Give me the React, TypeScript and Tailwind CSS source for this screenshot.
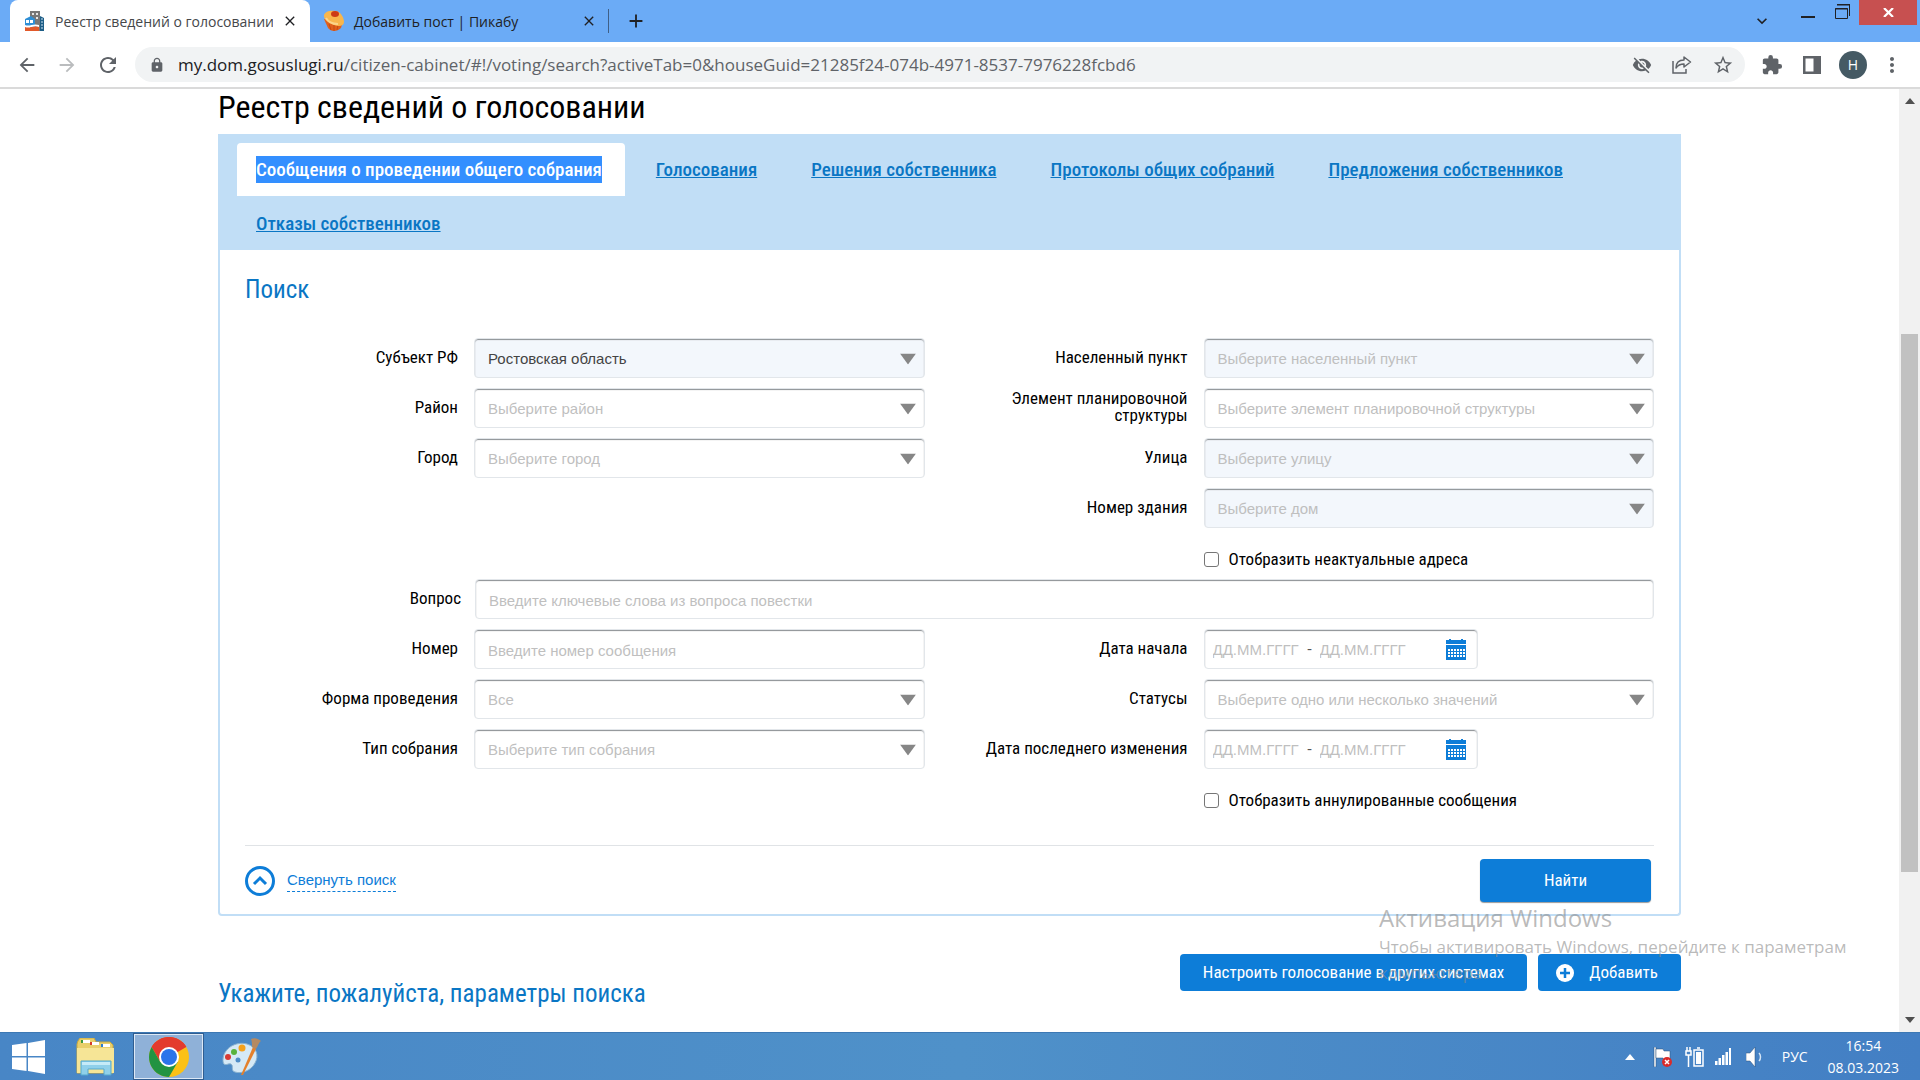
import React from 'react';
import {
  MdArrowBack,
  MdArrowForward,
  MdRefresh,
  MdLock,
  MdVisibilityOff,
  MdStarBorder,
  MdExtension,
  MdMoreVert,
  MdClose,
  MdAdd,
  MdKeyboardArrowDown,
} from 'react-icons/md';

const condensed = "font-['Roboto_Condensed','Liberation_Sans_Narrow',Roboto,sans-serif]";

const Arrow: React.FC = () => (
  <svg className="absolute right-[9px] top-1/2 -translate-y-1/2 mt-px pointer-events-none" width="16" height="11" viewBox="0 0 16 11">
    <path d="M0 0h16L8 11z" fill="#868686" />
  </svg>
);

const boxClass =
  'h-10 w-full rounded border border-[#e2e6ea] shadow-[inset_0_1px_1px_#8b8f93] text-[15px] appearance-none outline-none';

interface RowProps {
  id: string;
  label: string;
  children: React.ReactNode;
}

const Row: React.FC<RowProps> = ({ id, label, children }) => (
  <div className="flex h-10 items-center">
    <label htmlFor={id} className={`${condensed} w-[229px] pb-[2px] pr-4 text-right text-[17px] leading-[17px] text-black`}>
      {label}
    </label>
    <div className="relative flex-1">{children}</div>
  </div>
);

interface SelectRowProps {
  id: string;
  label: string;
  value: string;
  filled?: boolean;
  shaded?: boolean;
}

const SelectRow: React.FC<SelectRowProps> = ({ id, label, value, filled, shaded }) => (
  <Row id={id} label={label}>
    <select
      id={id}
      className={`${boxClass} pl-[13px] pr-8 pt-[2px] ${filled ? 'text-[#444]' : 'text-[#bfbfbf]'} ${shaded ? 'bg-[#f3f7fc]' : 'bg-white'}`}
    >
      <option>{value}</option>
    </select>
    <Arrow />
  </Row>
);

const CalendarIcon: React.FC = () => (
  <svg width="20" height="21" viewBox="0 0 20 21" fill="#0d7dd8">
    <path d="M3 0h2v1h10V0h2v1h3v4H0V1h3z" />
    <path d="M0 6h20v15H0z" />
    <g fill="#fff">
      {[10, 13, 16].map(y => [2, 5, 8, 11, 14, 17].map(x => <rect key={`${x}-${y}`} x={x} y={y} width="2" height="2" />))}
    </g>
  </svg>
);

const DateRow: React.FC<{ id: string; label: string }> = ({ id, label }) => (
  <Row id={id} label={label}>
    <div className={`${boxClass} flex items-center max-w-[274px] pl-2 pr-[11px]`}>
      <input id={id} placeholder="ДД.ММ.ГГГГ" className="w-[87px] pt-[2px] outline-none placeholder:text-[#bfbfbf]" />
      <span className="w-5 text-center text-[#555]">-</span>
      <input aria-label={`${label}, по`} placeholder="ДД.ММ.ГГГГ" className="w-[87px] pt-[2px] outline-none placeholder:text-[#bfbfbf]" />
      <button type="button" aria-label="Открыть календарь" className="ml-auto">
        <CalendarIcon />
      </button>
    </div>
  </Row>
);

const CheckRow: React.FC<{ id: string; label: string }> = ({ id, label }) => (
  <div className="flex h-10 items-center pl-[229px] pt-[2px]">
    <input
      id={id}
      type="checkbox"
      className="size-[15px] appearance-none rounded-[3px] border border-[#767676] bg-white"
    />
    <label htmlFor={id} className={`${condensed} pl-[10px] text-[17px] leading-5 text-black`}>
      {label}
    </label>
  </div>
);

const tabs = [
  'Сообщения о проведении общего собрания',
  'Голосования',
  'Решения собственника',
  'Протоколы общих собраний',
  'Предложения собственников',
  'Отказы собственников',
];

const HouseIcon: React.FC = () => (
  <svg width="22" height="22" viewBox="0 0 22 22" className="shrink-0">
    <path d="M6 1h10v20H6z" fill="#777" />
    <path d="M8 3h2v2H8zM12 3h2v2h-2zM12 7h2v2h-2z" fill="#e6e6e6" />
    <path d="M16 6l4 2v13h-4z" fill="#1d5d86" />
    <path d="M17 9h2M17 12h2M17 15h2M17 18h2" stroke="#cfe6f5" />
    <path d="M1 9l6-3 4 3v8H1z" fill="#2f8fd6" />
    <path d="M2 10h3v3H2zM6 10h3v3H6z" fill="#fff" />
    <path d="M1 15c5 2 8-2 14 0v2c-6-2-9 2-14 0z" fill="#fff" />
    <path d="M1 17c5 2 8-2 14 0v4H1z" fill="#e2592a" />
  </svg>
);

const CakeIcon: React.FC = () => (
  <svg width="22" height="22" viewBox="0 0 22 22" className="shrink-0">
    <path d="M1 9l4 9c3 4 9 4 13 0l2-7z" fill="#e0601c" />
    <path d="M6 14l2 6M11 15v6M15 15l-1 5" stroke="#c54a12" />
    <path d="M1 5c1-4 7-5 12-4s8 7 8 11-5 5-10 3S0 9 1 5z" fill="#f8b64c" />
    <path d="M3 8c2 4 7 6 12 6" stroke="#fbd48a" strokeWidth="2" fill="none" />
    <ellipse cx="12" cy="4" rx="4" ry="3" fill="#cc3b16" />
  </svg>
);

const ShareIcon: React.FC = () => (
  <svg width="20" height="18" viewBox="0 0 20 18" fill="none" stroke="#5f6368" strokeWidth="1.500">
    <path d="M1 5v12h13v-4" />
    <path d="M12 1l6.500 5-6.500 5V8c-4 0-6 1-8 4 0-5 3-8 8-8z" strokeLinejoin="round" />
  </svg>
);

const BrowserChrome: React.FC = () => (
  <header className="font-['Open_Sans','Noto_Sans',sans-serif]">
    <div className="flex h-[42px] bg-[#6babf6] pl-[10px] text-[14px] text-[#202124]">
      <div className="flex w-[300px] items-center gap-[9px] rounded-t-lg bg-white pl-[14px] pr-3">
        <HouseIcon />
        <span className="flex-1 overflow-hidden whitespace-nowrap text-[#45474a]">Реестр сведений о голосовании</span>
        <button aria-label="Закрыть вкладку">
          <MdClose size={16} />
        </button>
      </div>
      <div className="flex w-[298px] items-center gap-[9px] border-r border-transparent pl-[13px] pr-[10px]">
        <CakeIcon />
        <span className="flex-1">Добавить пост | Пикабу</span>
        <button aria-label="Закрыть вкладку">
          <MdClose size={16} />
        </button>
      </div>
      <div className="mt-[9px] h-6 w-px bg-[#3f5f86]" />
      <button aria-label="Новая вкладка" className="ml-4">
        <MdAdd size={22} />
      </button>
      <div className="ml-auto flex items-start">
        <button aria-label="Поиск вкладок" className="mr-[29px] mt-[11px]">
          <MdKeyboardArrowDown size={20} />
        </button>
        <button aria-label="Свернуть" className="mr-5 mt-4">
          <svg width="14" height="2"><path d="M0 0h14v2H0z" fill="#202124" /></svg>
        </button>
        <button aria-label="Восстановить" className="mr-[9px] mt-1">
          <svg width="15" height="15" viewBox="0 0 15 15" fill="none" stroke="#202124">
            <path d="M2 1h12.500v11M2 .5h13" />
            <path d="M.5 4.500h12v10H.5zM0 5h13" />
          </svg>
        </button>
        <button aria-label="Закрыть" className="mr-[3px] flex h-[25px] w-[58px] items-center justify-center bg-[#c75050]">
          <svg width="11" height="9" viewBox="0 0 11 9"><path d="M1 0l9 9M10 0L1 9" stroke="#fff" strokeWidth="2.200" /></svg>
        </button>
      </div>
    </div>
    <div className="flex h-[47px] items-center border-b-2 border-[#dadada] bg-white pl-4 pr-4 text-[#5f6368]">
      <button aria-label="Назад"><MdArrowBack size={22} /></button>
      <button aria-label="Вперёд" className="ml-[18px] text-[#babcbe]"><MdArrowForward size={22} /></button>
      <button aria-label="Обновить" className="ml-[18px]"><MdRefresh size={24} /></button>
      <div className="ml-[15px] flex h-[35px] flex-1 items-center rounded-full bg-[#f1f3f4] pl-[14px] pr-[11px]">
        <MdLock size={16} />
        <p className="flex-1 whitespace-nowrap pl-[13px] text-[17px]">
          <span className="text-[#202124]">my.dom.gosuslugi.ru</span>/citizen-cabinet/#!/voting/search?activeTab=0&amp;houseGuid=21285f24-074b-4971-8537-7976228fcbd6
        </p>
        <div className="flex items-center gap-5">
          <MdVisibilityOff size={20} />
          <ShareIcon />
          <MdStarBorder size={22} />
        </div>
      </div>
      <button aria-label="Расширения" className="ml-4"><MdExtension size={22} /></button>
      <button aria-label="Боковая панель" className="ml-5">
        <svg width="18" height="18" viewBox="0 0 18 18"><path d="M0 0h18v18H0zM2.500 2.500v13h8v-13z" fill="#5f6368" fillRule="evenodd" /></svg>
      </button>
      <button aria-label="Профиль" className="ml-[18px] size-7 rounded-full bg-[#455a64] text-[14px] leading-7 text-white">
        Н
      </button>
      <button aria-label="Меню" className="ml-[13px]"><MdMoreVert size={24} /></button>
    </div>
  </header>
);

const SearchPanel: React.FC = () => (
  <section className="rounded-b border-2 border-t-0 border-[#c1def6] px-[25px] pb-3">
    <h2 className={`${condensed} pt-5 text-[25px] leading-10 text-[#0a76c4]`}>Поиск</h2>
    <form className="pt-7">
      <div className="grid grid-cols-2 items-start gap-x-[50px]">
        <div className="grid gap-[10px]">
          <SelectRow id="region" label="Субъект РФ" value="Ростовская область" filled shaded />
          <SelectRow id="area" label="Район" value="Выберите район" />
          <SelectRow id="city" label="Город" value="Выберите город" />
        </div>
        <div className="grid gap-[10px]">
          <SelectRow id="settlement" label="Населенный пункт" value="Выберите населенный пункт" shaded />
          <SelectRow id="element" label="Элемент планировочной структуры" value="Выберите элемент планировочной структуры" />
          <SelectRow id="street" label="Улица" value="Выберите улицу" shaded />
          <SelectRow id="house" label="Номер здания" value="Выберите дом" shaded />
          <CheckRow id="old-addresses" label="Отобразить неактуальные адреса" />
        </div>
      </div>
      <div className="mb-[10px] mt-px flex items-center">
        <label htmlFor="question" className={`${condensed} w-[230px] pb-[2px] pr-[14px] text-right text-[17px] leading-[17px] text-black`}>
          Вопрос
        </label>
        <input
          id="question"
          placeholder="Введите ключевые слова из вопроса повестки"
          className={`${boxClass} flex-1 px-[13px] pt-[2px] placeholder:text-[#bfbfbf]`}
        />
      </div>
      <div className="grid grid-cols-2 items-start gap-x-[50px]">
        <div className="grid gap-[10px]">
          <Row id="number" label="Номер">
            <input id="number" placeholder="Введите номер сообщения" className={`${boxClass} px-[13px] pt-[2px] placeholder:text-[#bfbfbf]`} />
          </Row>
          <SelectRow id="form" label="Форма проведения" value="Все" />
          <SelectRow id="type" label="Тип собрания" value="Выберите тип собрания" />
        </div>
        <div className="grid gap-[10px]">
          <DateRow id="start-date" label="Дата начала" />
          <SelectRow id="statuses" label="Статусы" value="Выберите одно или несколько значений" />
          <DateRow id="change-date" label="Дата последнего изменения" />
          <CheckRow id="cancelled" label="Отобразить аннулированные сообщения" />
        </div>
      </div>
      <div className="mt-[26px] flex items-center border-t border-[#e0e3e6] pr-[3px] pt-[13px]">
        <svg width="30" height="30" viewBox="0 0 30 30" fill="none" stroke="#0d7dd8">
          <circle cx="15" cy="15" r="13.500" strokeWidth="3" />
          <path d="M9 18l6-6 6 6" strokeWidth="3" />
        </svg>
        <a href="#search" className="ml-3 border-b border-dashed border-[#0d7dd8] text-[15px] leading-[22px] text-[#0d7dd8]">
          Свернуть поиск
        </a>
        <button
          type="button"
          className={`${condensed} ml-auto h-[43px] w-[171px] rounded bg-[#0d7dd8] text-[17px] text-white shadow-[0_1px_1px_#999]`}
        >
          Найти
        </button>
      </div>
    </form>
  </section>
);

const Taskbar: React.FC = () => (
  <footer className="flex h-12 items-stretch border-t border-[#3c78b4] bg-linear-to-r from-[#4886c6] via-[#4f91c9] to-[#437fc4] font-['Open_Sans','Noto_Sans',sans-serif] text-white">
    <button aria-label="Пуск" className="ml-3">
      <svg width="34" height="34" viewBox="0 0 34 34" fill="#fff">
        <path d="M0 5l14.500-2v13H0zM16 3l17-3v16H16zM0 17.500h14.500V31L0 29zM16 17.500h17V34l-17-3z" />
      </svg>
    </button>
    <button aria-label="Проводник" className="ml-[30px]">
      <svg width="40" height="38" viewBox="0 0 40 38">
        <path d="M2 3l2-3h14l2 4h14l3 3v28H1V6z" fill="#e9cf6c" stroke="#c9a93f" />
        <path d="M5 2h9v3H5z" fill="#fff" /><path d="M5 2h2v3H5z" fill="#3a9a3e" />
        <path d="M14 4h9v3h-9z" fill="#fff" /><path d="M14 4h2v3h-2z" fill="#d63a2a" />
        <path d="M25 6h9v3h-9z" fill="#fff" /><path d="M25 6h2v3h-2z" fill="#2c7fd0" />
        <path d="M1 10h37v25H1z" fill="#f6e596" />
        <path d="M5 23h30v14h-7v-6H12v6H5z" fill="#8fd0ea" stroke="#54a9cf" />
        <path d="M6 24h28v3H6z" fill="#c5ebf8" />
      </svg>
    </button>
    <button aria-label="Google Chrome" className="ml-[17px] flex w-[71px] items-center justify-center border border-[#2f5d90] bg-[#8fb1d8] shadow-[inset_0_0_0_1px_#dce8f5]">
      <svg width="40" height="40" viewBox="0 0 40 40">
        <circle cx="20" cy="20" r="20" fill="#fbc116" />
        <path d="M20 20L2.680 10A20 20 0 0 1 37.320 10z" fill="#e33b2e" />
        <path d="M20 10h17.320a20 20 0 0 0-34.640 0L11.300 25z" fill="#e33b2e" />
        <path d="M2.680 10A20 20 0 0 0 20 40l8.700-15L20 25l-8.700 0z" fill="#229342" />
        <circle cx="20" cy="20" r="10" fill="#fff" />
        <circle cx="20" cy="20" r="8" fill="#2b74ea" />
      </svg>
    </button>
    <button aria-label="Paint" className="ml-[18px]">
      <svg width="40" height="38" viewBox="0 0 40 38">
        <path d="M1 21C2 10 14 3 25 6c10 3 12 12 8 19-4 8-14 11-20 9-4-1-2-5-3-7-2-3-6 1-8-1-1-1-1-3-1-5z" fill="#d5e9f6" stroke="#8bb3d0" />
        <circle cx="16" cy="22" r="2.500" fill="#4e8dc8" />
        <circle cx="6" cy="19" r="3" fill="#d83a34" />
        <circle cx="12" cy="14" r="3" fill="#58b23c" />
        <circle cx="20" cy="10" r="3.500" fill="#f6a21c" />
        <path d="M31 9l3 2-13 26h-2z" fill="#e3802c" />
        <path d="M29 1c4-2 8 0 10 2-2 1-3 5-5 8l-4-2c0-3 0-6-1-8z" fill="#b58a62" />
      </svg>
    </button>
    <div className="ml-auto flex items-center">
      <svg width="10" height="6" viewBox="0 0 10 6"><path d="M5 0l5 6H0z" fill="#fff" /></svg>
      <svg className="ml-[18px]" width="20" height="20" viewBox="0 0 20 20">
        <path d="M1 0h2v20H1z" fill="#fff" stroke="#2b4d75" strokeWidth=".5" />
        <path d="M3 2h7l1 2h6v9h-6l-1-2H3z" fill="#fff" stroke="#2b4d75" strokeWidth=".5" />
        <circle cx="14" cy="15" r="5" fill="#d92b2b" />
        <path d="M12 13l4 4M16 13l-4 4" stroke="#fff" strokeWidth="1.500" />
      </svg>
      <svg className="ml-3" width="19" height="20" viewBox="0 0 19 20" fill="none" stroke="#fff" strokeWidth="1.500">
        <path d="M2 0v4M5 0v4M1 4h5v4H1zM3.500 8v12" />
        <path d="M9 3h9v16H9zM12 1h3" /><path d="M11 5h5v12h-5z" fill="#fff" stroke="none" />
      </svg>
      <svg className="ml-[11px]" width="16" height="17" viewBox="0 0 16 17" fill="#fff">
        <path d="M0 13h2.500v4H0zM3.500 10H6v7H3.500zM7 7h2.500v10H7zM10.500 4H13v13h-2.500zM14 0h2v17h-2z" />
      </svg>
      <svg className="ml-[15px]" width="17" height="20" viewBox="0 0 17 20">
        <path d="M0 6h4l5-6v20l-5-6H0z" fill="#fff" stroke="#2b4d75" strokeWidth=".5" />
        <path d="M13 6c2 2 2 6 0 8" stroke="#d5e5f5" fill="none" strokeWidth="1.500" />
      </svg>
      <span className="ml-[19px] text-[14px]">РУС</span>
      <p className="ml-5 mr-[21px] text-center text-[14px] leading-[22px]">
        16:54
        <br />
        08.03.2023
      </p>
    </div>
  </footer>
);

const App: React.FC = () => {
  return (
    <div className="relative flex h-screen flex-col overflow-hidden bg-white font-['Liberation_Sans',Arial,sans-serif]">
      <BrowserChrome />
      <div className="flex min-h-0 flex-1">
        <main className="min-w-0 flex-1 overflow-hidden">
          <div className="mx-auto w-full max-w-[1463px]">
            <h1 className={`${condensed} pb-2 text-[32px] leading-[37px] text-black`}>Реестр сведений о голосовании</h1>
            <nav className={`${condensed} flex flex-wrap gap-x-3 gap-y-px bg-[#c1def6] px-[19px] pt-[9px] text-[19px] font-medium leading-[27px]`}>
              {tabs.map((tab, i) => (
                <a
                  key={tab}
                  href={`#tab-${i}`}
                  className={
                    i === 0
                      ? 'rounded-t bg-white py-[13px] pl-[19px] pr-[23px] text-white'
                      : 'py-[13px] pl-[19px] pr-[23px] text-[#0a76c4] underline'
                  }
                >
                  {i === 0 ? <span className="block bg-[#338fff]">{tab}</span> : tab}
                </a>
              ))}
            </nav>
            <SearchPanel />
            <div className="flex items-start justify-between pt-[38px]">
              <h2 className={`${condensed} pt-[22px] text-[25px] leading-9 text-[#0a76c4]`}>
                Укажите, пожалуйста, параметры поиска
              </h2>
              <div className={`${condensed} flex gap-[11px] text-[17px] text-white`}>
                <button className="h-[37px] rounded bg-[#0d7dd8] px-[23px]">Настроить голосование в других системах</button>
                <button className="flex h-[37px] items-center gap-[15px] rounded bg-[#0d7dd8] pl-[18px] pr-[23px]">
                  <svg width="18" height="18" viewBox="0 0 18 18">
                    <circle cx="9" cy="9" r="9" fill="#fff" />
                    <path d="M9 4v10M4 9h10" stroke="#0d7dd8" strokeWidth="2.500" />
                  </svg>
                  Добавить
                </button>
              </div>
            </div>
          </div>
        </main>
        <div className="flex w-[21px] flex-col items-center bg-[#f1f1f1] py-[9px]">
          <svg width="10" height="6" viewBox="0 0 10 6"><path d="M5 0l5 6H0z" fill="#505050" /></svg>
          <div className="w-full flex-1 px-[2px] pb-[145px] pt-[230px]">
            <div className="h-full bg-[#c1c1c1]" />
          </div>
          <svg width="10" height="6" viewBox="0 0 10 6"><path d="M5 6l5-6H0z" fill="#505050" /></svg>
        </div>
      </div>
      <Taskbar />
      <div className="pointer-events-none absolute bottom-[94px] right-[61px] w-[480px] font-['Open_Sans','Noto_Sans',sans-serif] text-[#8c8c8c]/60">
        <p className="text-[24px] leading-8">Активация Windows</p>
        <p className="text-[17px] leading-[26px]">
          Чтобы активировать Windows, перейдите к параметрам компьютера.
        </p>
      </div>
    </div>
  );
};

export default App;
